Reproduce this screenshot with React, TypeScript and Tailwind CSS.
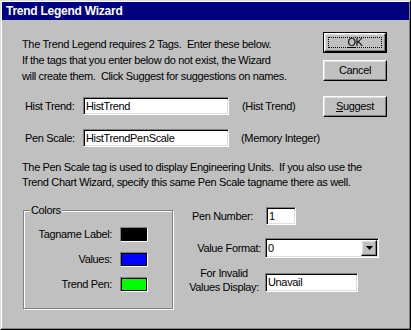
import React from "react";

const field =
  "bg-white border border-t-[#808080] border-l-[#808080] border-r-white border-b-white shadow-[inset_1px_1px_0_#000,inset_-1px_-1px_0_#dfdfdf] flex items-center pl-[2px] overflow-hidden whitespace-nowrap";

const raised =
  "bg-[#c0c0c0] border border-t-white border-l-white border-r-black border-b-black shadow-[inset_-1px_-1px_0_#808080,inset_1px_1px_0_#dfdfdf]";

function Btn({ children, def }: { children: React.ReactNode; def?: boolean }) {
  if (def) {
    return (
      <div className="w-[64px] h-[21px] border border-black">
        <div className={`w-full h-full ${raised} flex items-center justify-center p-[3px]`}>
          <div className="w-full h-full border border-dotted border-black flex items-center justify-center">
            {children}
          </div>
        </div>
      </div>
    );
  }
  return (
    <div className={`w-[64px] h-[21px] ${raised} flex items-center justify-center`}>{children}</div>
  );
}

function Swatch({ color }: { color: string }) {
  return (
    <div className="w-[28px] h-[15px] border border-t-[#808080] border-l-[#808080] border-r-white border-b-white">
      <div className="w-full h-full border border-black" style={{ background: color }} />
    </div>
  );
}

export default function App() {
  return (
    <div className="w-[411px] h-[330px] bg-[#c0c0c0] font-['Liberation_Sans',Arial,sans-serif] text-[11px] tracking-[-0.35px] text-black">
      <div className="w-full h-full border border-t-[#dfdfdf] border-l-[#dfdfdf] border-r-black border-b-black">
        <div className="w-full h-full border border-t-white border-l-white border-r-[#808080] border-b-[#808080] flex flex-col">
          <div className="h-[18px] bg-[#000080] text-white font-bold text-[12px] tracking-[-0.25px] flex items-center pl-[4px]">
            Trend Legend Wizard
          </div>
          <div className="flex flex-col pl-[20px] pr-[22px]">
            {/* Row 1 */}
            <div className="h-[75px] flex justify-between">
              <div className="mt-[16px] leading-[16px] whitespace-pre">
                <div>The Trend Legend requires 2 Tags.  Enter these below.</div>
                <div>If the tags that you enter below do not exist, the Wizard</div>
                <div>will create them.  Click Suggest for suggestions on names.</div>
              </div>
              <div className="mt-[12px] flex flex-col gap-[7px]">
                <Btn def>
                  <span>
                    <span className="underline">O</span>K
                  </span>
                </Btn>
                <Btn>Cancel</Btn>
              </div>
            </div>
            {/* Hist Trend */}
            <div className="h-[22px] flex items-center">
              <div className="w-[61px] pl-[3px]">Hist Trend:</div>
              <div className={`w-[146px] h-[18px] ${field}`}>HistTrend</div>
              <div className="ml-[13px]">(Hist Trend)</div>
              <div className="ml-auto">
                <Btn>
                  <span>
                    <span className="underline">S</span>uggest
                  </span>
                </Btn>
              </div>
            </div>
            {/* Pen Scale */}
            <div className="mt-[10px] h-[22px] flex items-center">
              <div className="w-[61px] pl-[3px]">Pen Scale:</div>
              <div className={`w-[146px] h-[18px] ${field}`}>HistTrendPenScale</div>
              <div className="ml-[12px]">(Memory Integer)</div>
            </div>
            {/* Paragraph */}
            <div className="mt-[11px] leading-[15px] whitespace-pre">
              <div>The Pen Scale tag is used to display Engineering Units.  If you also use the</div>
              <div>Trend Chart Wizard, specify this same Pen Scale tagname there as well.</div>
            </div>
            {/* Bottom */}
            <div className="mt-[17px] flex">
              <div className="relative ml-[1px] mt-[3px] w-[150px] h-[99px] border border-[#808080] shadow-[1px_1px_0_#fff,inset_1px_1px_0_#fff]">
                <span className="absolute left-[6px] top-[-8px] px-[1px] bg-[#c0c0c0] leading-[14px]">Colors</span>
                <div className="pt-[16px] flex flex-col gap-[10px]">
                  <div className="h-[15px] flex items-center">
                    <div className="w-[88px] text-right">Tagname Label:</div>
                    <div className="ml-[8px]">
                      <Swatch color="#000000" />
                    </div>
                  </div>
                  <div className="h-[15px] flex items-center">
                    <div className="w-[88px] text-right">Values:</div>
                    <div className="ml-[8px]">
                      <Swatch color="#0000ff" />
                    </div>
                  </div>
                  <div className="h-[15px] flex items-center">
                    <div className="w-[88px] text-right">Trend Pen:</div>
                    <div className="ml-[8px]">
                      <Swatch color="#00ff00" />
                    </div>
                  </div>
                </div>
              </div>
              <div className="ml-[17px] flex flex-col">
                <div className="h-[18px] flex items-center">
                  <div className="w-[63px] text-right whitespace-nowrap">Pen Number:</div>
                  <div className={`ml-[13px] w-[30px] h-[18px] ${field}`}>1</div>
                </div>
                <div className="mt-[13px] h-[20px] flex items-center">
                  <div className="w-[71px] text-right whitespace-nowrap">Value Format:</div>
                  <div className={`ml-[4px] w-[114px] h-[20px] ${field} justify-between pr-[1px]`}>
                    <span>0</span>
                    <div className={`w-[16px] h-[16px] ${raised} flex items-center justify-center`}>
                      <svg width="7" height="4" viewBox="0 0 7 4">
                        <path d="M0 0H7L3.5 4Z" fill="#000" />
                      </svg>
                    </div>
                  </div>
                </div>
                <div className="mt-[8px] flex items-start">
                  <div className="w-[68px] flex flex-col items-center leading-[14px] whitespace-nowrap">
                    <div>For Invalid</div>
                    <div>Values Display:</div>
                  </div>
                  <div className={`ml-[7px] mt-[7px] w-[93px] h-[19px] ${field}`}>Unavail</div>
                </div>
              </div>
            </div>
          </div>
        </div>
      </div>
    </div>
  );
}
